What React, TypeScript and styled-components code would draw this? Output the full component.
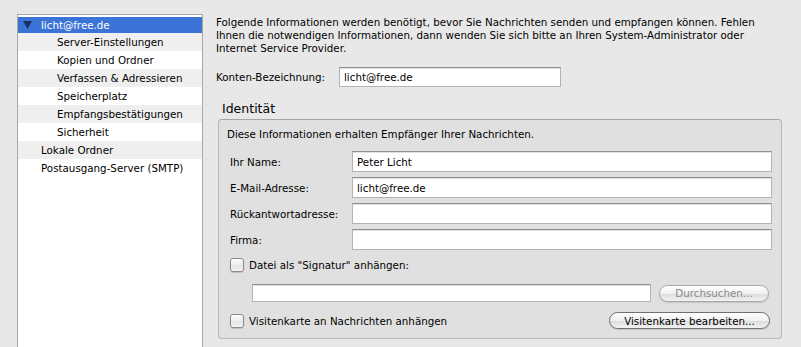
import React from "react";
import styled, { createGlobalStyle } from "styled-components";

const Global = createGlobalStyle`
  html, body { margin: 0; padding: 0; background: #e8e8e8; }
  body { font-family: "DejaVu Sans", "Liberation Sans", sans-serif; font-size: 10.3px; color: #000; overflow: hidden; }
  * { box-sizing: border-box; }
`;

const Page = styled.div`
  display: flex;
  align-items: flex-start;
  padding: 14px 0 0 17px;
  height: 347px;
  gap: 13px;
`;

const Sidebar = styled.div`
  width: 186px;
  height: 340px;
  background: #fff;
  border: 1px solid #a8a8a8;
  border-bottom: none;
  display: flex;
  flex-direction: column;
`;

const Row = styled.div<{ $indent: number; $alt: boolean; $selected?: boolean }>`
  height: 18px;
  display: flex;
  align-items: center;
  padding-left: ${(p) => p.$indent}px;
  background: ${(p) => (p.$selected ? "#3b73d6" : p.$alt ? "#efefef" : "#fff")};
  color: ${(p) => (p.$selected ? "#fff" : "#000")};
  border-top: ${(p) => (p.$selected ? "2px solid #fff" : "none")};
  white-space: nowrap;
`;

const Tri = styled.svg`
  width: 9px;
  height: 8px;
  margin-left: -18px;
  margin-right: 9px;
`;

const Main = styled.div`
  width: 566px;
  display: flex;
  flex-direction: column;
`;

const Intro = styled.p`
  margin: 2px 0 0 0;
  line-height: 13px;
  width: 560px;
`;

const KontoRow = styled.div`
  display: flex;
  align-items: center;
  margin-top: 12px;
`;

const KontoLabel = styled.span`
  width: 123px;
`;

const Input = styled.div<{ $w: number; $h?: number }>`
  width: ${(p) => p.$w}px;
  height: ${(p) => p.$h ?? 20}px;
  background: #fff;
  border: 1px solid #b4b4b4;
  border-top-color: #8e8e8e;
  box-shadow: inset 0 1px 0 #e2e2e2;
  padding-left: 4px;
  display: flex;
  align-items: center;
`;

const GroupTitle = styled.div`
  font-size: 12.5px;
  margin: 14px 0 0 6px;
  line-height: 16px;
`;

const Group = styled.div`
  margin: 2px 0 0 2px;
  width: 564px;
  height: 220px;
  background: #e0e0e0;
  border: 1px solid #b9b9b9;
  border-top-color: #a4a4a4;
  border-radius: 4px;
  padding: 7px 10px 0 8px;
  display: flex;
  flex-direction: column;
`;

const GroupIntro = styled.div`
  line-height: 14px;
`;

const Fields = styled.div`
  display: grid;
  grid-template-columns: 122px 420px;
  row-gap: 5px;
  margin: 10px 0 0 3px;
  align-items: center;
`;

const CheckLine = styled.div<{ $top: number }>`
  display: flex;
  align-items: center;
  margin: ${(p) => p.$top}px 0 0 3px;
  gap: 5px;
  height: 16px;
`;

const Box = styled.span`
  width: 14px;
  height: 14px;
  border: 1px solid #8a8a8a;
  border-radius: 3px;
  background: linear-gradient(#ffffff, #e6e6e6 60%, #f4f4f4);
  box-shadow: 0 1px 1px rgba(0,0,0,0.15);
`;

const SigRow = styled.div`
  display: flex;
  align-items: center;
  margin: 11px 0 0 25px;
  gap: 8px;
`;

const Pill = styled.div<{ $w: number; $disabled?: boolean }>`
  width: ${(p) => p.$w}px;
  height: 17px;
  border-radius: 9px;
  border: 1px solid ${(p) => (p.$disabled ? "#a8a8a8" : "#707070")};
  background: linear-gradient(#ffffff, #f0f0f0 50%, #dcdcdc 51%, #f2f2f2);
  color: ${(p) => (p.$disabled ? "#8a8a8a" : "#000")};
  display: flex;
  align-items: center;
  justify-content: center;
  box-shadow: 0 1px 1px rgba(0,0,0,0.12);
`;

const LastLine = styled.div`
  display: flex;
  align-items: center;
  justify-content: space-between;
  margin: 10px 0 0 3px;
  width: 540px;
`;

const items: { label: string; indent: number; selected?: boolean }[] = [
  { label: "licht@free.de", indent: 23, selected: true },
  { label: "Server-Einstellungen", indent: 39 },
  { label: "Kopien und Ordner", indent: 39 },
  { label: "Verfassen & Adressieren", indent: 39 },
  { label: "Speicherplatz", indent: 39 },
  { label: "Empfangsbestätigungen", indent: 39 },
  { label: "Sicherheit", indent: 39 },
  { label: "Lokale Ordner", indent: 23 },
  { label: "Postausgang-Server (SMTP)", indent: 23 },
];

const fields: [string, string][] = [
  ["Ihr Name:", "Peter Licht"],
  ["E-Mail-Adresse:", "licht@free.de"],
  ["Rückantwortadresse:", ""],
  ["Firma:", ""],
];

export default function App() {
  return (
    <>
      <Global />
      <Page>
        <Sidebar>
          {items.map((it, i) => (
            <Row key={it.label} $indent={it.indent} $alt={i % 2 === 1} $selected={it.selected}>
              {it.selected && (
                <Tri viewBox="0 0 9 8">
                  <polygon points="0,0 9,0 4.5,8" fill="#1c2f66" />
                </Tri>
              )}
              {it.label}
            </Row>
          ))}
        </Sidebar>
        <Main>
          <Intro>
            Folgende Informationen werden benötigt, bevor Sie Nachrichten senden und empfangen können. Fehlen
            Ihnen die notwendigen Informationen, dann wenden Sie sich bitte an Ihren System-Administrator oder
            Internet Service Provider.
          </Intro>
          <KontoRow>
            <KontoLabel>Konten-Bezeichnung:</KontoLabel>
            <Input $w={222}>licht@free.de</Input>
          </KontoRow>
          <GroupTitle>Identität</GroupTitle>
          <Group>
            <GroupIntro>Diese Informationen erhalten Empfänger Ihrer Nachrichten.</GroupIntro>
            <Fields>
              {fields.map(([l, v]) => (
                <React.Fragment key={l}>
                  <span>{l}</span>
                  <Input $w={420} $h={21}>{v}</Input>
                </React.Fragment>
              ))}
            </Fields>
            <CheckLine $top={7}>
              <Box />
              <span>Datei als "Signatur" anhängen:</span>
            </CheckLine>
            <SigRow>
              <Input $w={399} $h={18} />
              <Pill $w={110} $disabled>Durchsuchen...</Pill>
            </SigRow>
            <LastLine>
              <CheckLine $top={0} style={{ margin: 0 }}>
                <Box />
                <span>Visitenkarte an Nachrichten anhängen</span>
              </CheckLine>
              <Pill $w={161}>Visitenkarte bearbeiten...</Pill>
            </LastLine>
          </Group>
        </Main>
      </Page>
    </>
  );
}
